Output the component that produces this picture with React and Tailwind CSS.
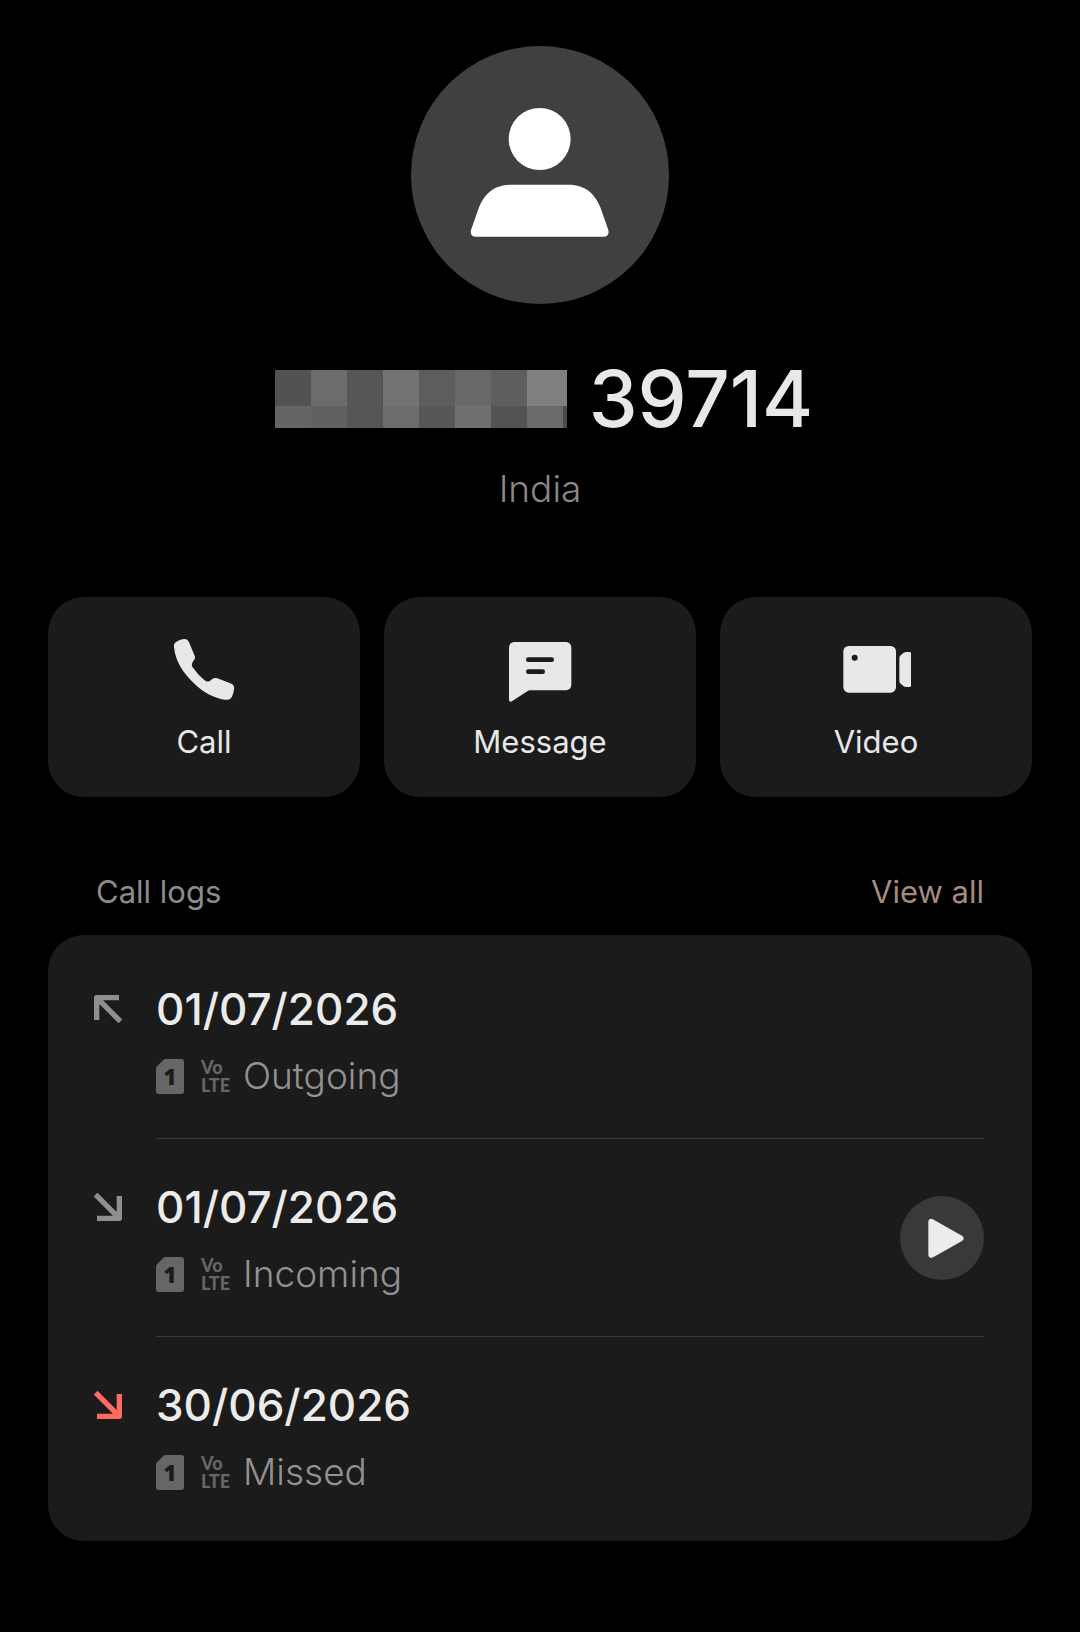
import React from 'react';

const maskedDigits = [
  ['bg-[#525252]', 'bg-[#656565]'],
  ['bg-[#6c6c6c]', 'bg-[#616161]'],
  ['bg-[#565656]', 'bg-[#555555]'],
  ['bg-[#737373]', 'bg-[#6d6d6d]'],
  ['bg-[#5d5d5d]', 'bg-[#565656]'],
  ['bg-[#686868]', 'bg-[#707070]'],
  ['bg-[#5e5e5e]', 'bg-[#535353]'],
  ['bg-[#808080]', 'bg-[#6a6a6a]'],
];

const callLogs = [
  { id: 1, date: '01/07/2026', type: 'Outgoing', recording: false },
  { id: 2, date: '01/07/2026', type: 'Incoming', recording: true },
  { id: 3, date: '30/06/2026', type: 'Missed', recording: false },
];

const PhoneIcon = () => (
  <svg className="size-[72px]" viewBox="0 0 216 216" fill="currentColor" aria-hidden="true">
    <path d="M18 42C17 30 24 26 36 21C50 16 58 17 63 28L80 68C83 75 80 78 76 84C71 91 70 98 74 103C84 117 98 133 110 142C116 147 122 147 129 141C136 135 142 134 148 136L187 151C196 154 200 160 198 170C196 182 193 190 189 195C186 200 180 201 170 200C140 196 105 178 80 153C45 120 22 85 18 42Z" />
  </svg>
);

const MessageIcon = () => (
  <svg className="size-[72px]" viewBox="0 0 216 216" aria-hidden="true">
    <path fill="currentColor" d="M33 27H184C196 27 202 34 202 45V154C202 165 196 172 184 172H80C76 172 74 173 70 175L25 204C19 208 15 206 15 199V45C15 34 21 27 33 27Z" />
    <path d="M73 80H143M73 116H116" stroke="#1b1b1b" strokeWidth="14" strokeLinecap="round" />
  </svg>
);

const VideoIcon = () => (
  <svg className="size-[72px]" viewBox="0 0 216 216" aria-hidden="true">
    <rect x="10" y="39" width="158" height="140" rx="16" fill="currentColor" />
    <circle cx="44" cy="74" r="9" fill="#1b1b1b" />
    <path fill="currentColor" d="M213 60V158Q213 162 208 162H199Q194 162 190 159L182 152Q178 149 178 144V75Q178 70 182 67L190 60Q194 57 199 57H208Q213 57 213 60Z" />
  </svg>
);

const CallArrow = ({ type }) => {
  const color = type === 'Missed' ? 'text-[#ff6b61]' : 'text-[#8f8f8f]';
  const direction = type === 'Outgoing' ? '' : 'rotate-180';
  return (
    <svg className={`size-[30px] ${color} ${direction}`} viewBox="0 0 90 90" fill="none" stroke="currentColor" strokeWidth="16" strokeLinejoin="round" aria-hidden="true">
      <path d="M78 11H11V78M11 11L82 82" />
    </svg>
  );
};

const SimBadge = () => (
  <span className="relative flex h-[35px] w-7 items-center justify-center">
    <svg className="absolute inset-0 h-full w-full" viewBox="0 0 84 105" aria-hidden="true">
      <path fill="#666666" d="M30 0H76Q84 0 84 8V97Q84 105 76 105H8Q0 105 0 97V30Q0 25 4 21L21 4Q25 0 30 0Z" />
    </svg>
    <span className="relative font-['Noto_Sans',sans-serif] text-[22px] leading-[35px] font-black text-[#1b1b1b]">1</span>
  </span>
);

const ActionButton = ({ icon, label }) => (
  <button type="button" className="flex flex-1 flex-col items-center rounded-[36px] bg-[#1b1b1b] pt-9 pb-[31px] text-[#e8e8e8]">
    {icon}
    <span className="mt-[13px] text-[31px] leading-[48px]">{label}</span>
  </button>
);

const CallLogItem = ({ log, last }) => (
  <li className="flex pr-12 pl-[45px]">
    <div className="mt-9 flex h-16 w-[63px] shrink-0 items-center">
      <CallArrow type={log.type} />
    </div>
    <div className={`flex flex-1 items-center justify-between border-b pt-9 pb-[35px] ${last ? 'border-transparent' : 'border-[#3a3a3a]'}`}>
      <div className="flex flex-col gap-2">
        <p className="text-[44px] leading-[64px] font-medium text-[#ebebeb]">{log.date}</p>
        <div className="flex h-[54px] items-center">
          <SimBadge />
          <span className="ml-[17px] w-8 font-['Lato',sans-serif] text-[18px] leading-[18px] font-black text-[#666666]">
            Vo
            <br />
            LTE
          </span>
          <span className="ml-[10px] text-[37px] leading-[54px] font-[350] text-[#929292]">{log.type}</span>
        </div>
      </div>
      {log.recording && (
        <button type="button" aria-label="Play recording" className="size-[84px] rounded-full bg-[#393939] text-[#ececec]">
          <svg className="size-full" viewBox="0 0 252 252" fill="currentColor" aria-hidden="true">
            <path d="M85 78C85 69 93 66 101 71L186 119C193 124 193 130 186 135L101 183C93 188 85 185 85 176Z" />
          </svg>
        </button>
      )}
    </div>
  </li>
);

const App = () => {
  return (
    <main className="min-h-screen bg-black px-12 pt-[46px] pb-20 font-['Inter',sans-serif]">
      <section className="flex flex-col items-center">
        <svg className="size-[258px]" viewBox="0 0 774 774" role="img" aria-label="Contact photo">
          <circle cx="387" cy="387" r="387" fill="#404040" />
          <circle cx="386" cy="279" r="93" fill="#ffffff" />
          <path fill="#ffffff" d="M300 416H472C525 416 552 445 568 484L592 552C595 564 589 572 578 572H194C183 572 177 564 180 552L204 484C220 445 247 416 300 416Z" />
        </svg>
        <h1 className="mt-[47px] flex items-center gap-[22px] pl-2 text-[#e8e8e8]">
          <span className="flex h-[58px]" role="img" aria-label="Hidden digits">
            {maskedDigits.map(([top, bottom], i) => (
              <span key={i} className="flex w-9 flex-col">
                <span className={`h-9 ${top}`} />
                <span className={`flex-1 ${bottom}`} />
              </span>
            ))}
            <span className="flex w-1 flex-col">
              <span className="h-9 bg-[#808080]" />
              <span className="flex-1 bg-[#4c4c4c]" />
            </span>
          </span>
          <span className="text-[78px] leading-[96px] font-medium">39714</span>
        </h1>
        <p className="mt-[18px] text-[37px] leading-[48px] font-[350] text-[#888888]">India</p>
      </section>

      <div className="mt-[84px] flex gap-6">
        <ActionButton icon={<PhoneIcon />} label="Call" />
        <ActionButton icon={<MessageIcon />} label="Message" />
        <ActionButton icon={<VideoIcon />} label="Video" />
      </div>

      <section className="mt-[71px]">
        <div className="flex items-center justify-between px-12 text-[31px] leading-[48px]">
          <h2 className="text-[#8c8c8c]">Call logs</h2>
          <a href="#call-logs" className="text-[#a58a83]">View all</a>
        </div>
        <ul id="call-logs" className="mt-[19px] rounded-[36px] bg-[#1b1b1b] py-[6px]">
          {callLogs.map((log, i) => (
            <CallLogItem key={log.id} log={log} last={i === callLogs.length - 1} />
          ))}
        </ul>
      </section>
    </main>
  );
};

export default App;
